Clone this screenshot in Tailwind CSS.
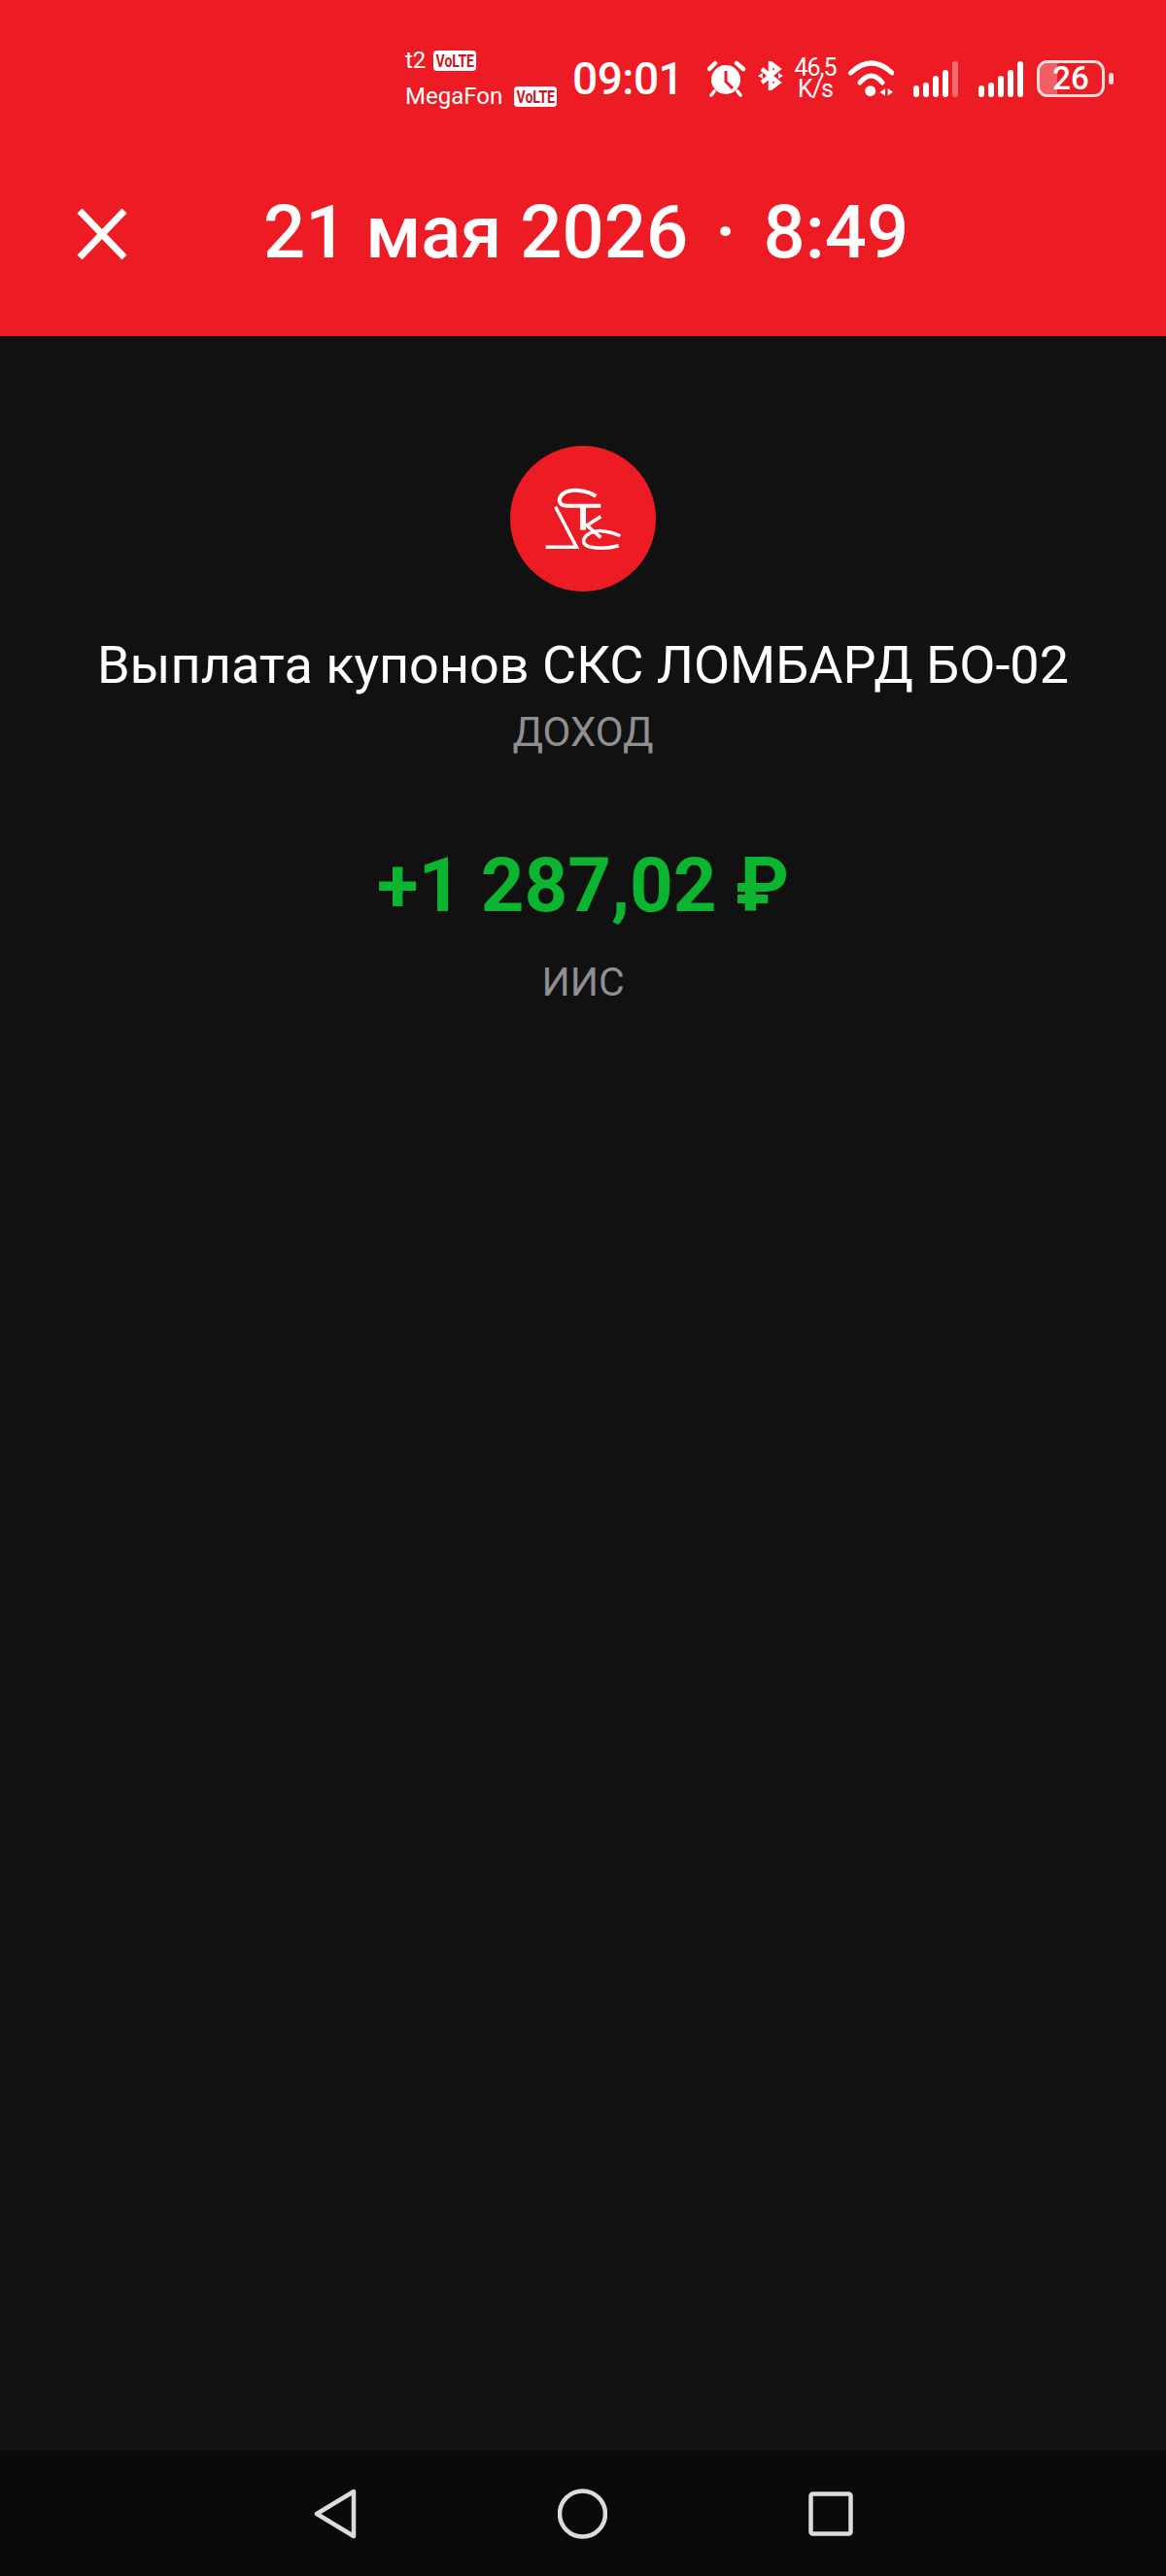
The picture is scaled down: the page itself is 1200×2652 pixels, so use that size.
<!DOCTYPE html>
<html>

<head>
    <meta charset="UTF-8">
    <title>Операция</title>
    <script src="https://cdn.jsdelivr.net/npm/@tailwindcss/browser@4"></script>
</head>

<body class="bg-[#111111] font-['Roboto',sans-serif] text-white">
    <div class="flex flex-col w-[1200px] h-[2652px] overflow-hidden">
        <!-- red header with status bar -->
        <header class="bg-[#ed1c24] h-[346px] shrink-0">
            <div class="flex items-center h-[162px] pl-[417px]">
                <div class="flex flex-col gap-[16px] w-[160px] text-[24px] leading-[21px]">
                    <div class="flex items-center gap-[8px] h-[21px]">
                        <span>t2</span>
                        <span class="flex items-center justify-center bg-white text-[#c9161e] rounded-[4px] w-[44px] h-[21px] text-[18px] leading-[21px] font-bold">
                            <span class="inline-block scale-x-[0.78]">VoLTE</span>
                        </span>
                    </div>
                    <div class="flex items-center gap-[12px] h-[21px]">
                        <span>MegaFon</span>
                        <span class="flex items-center justify-center bg-white text-[#c9161e] rounded-[4px] w-[44px] h-[21px] text-[18px] leading-[21px] font-bold">
                            <span class="inline-block scale-x-[0.78]">VoLTE</span>
                        </span>
                    </div>
                </div>
                <span class="ml-[12px] text-[46px] leading-[46px] w-[110px] tracking-[-0.5px] font-medium">09:01</span>
                <!-- alarm -->
                <svg class="ml-[29px]" width="40" height="38" viewBox="0 0 40 38" fill="none">
                    <circle cx="19" cy="20" r="15" fill="white" />
                    <path d="M19 11v11l7 7" stroke="#ed1c24" stroke-width="3" />
                    <path d="M2 9 8 3M30 3l7 6" stroke="white" stroke-width="4.5" stroke-linecap="round" />
                    <path d="M7 32l-3 4M31 32l3 4" stroke="white" stroke-width="3.5" stroke-linecap="round" />
                </svg>
                <!-- bluetooth -->
                <svg class="ml-[12px] mb-[6px]" width="26" height="30" viewBox="0 0 26 30" fill="none">
                    <path d="M4 8 21 22 13 28V2l8 6L4 22" stroke="white" stroke-width="4.5" />
                    <path d="M0 15 5 12V18ZM26 15 21 12V18Z" fill="white" />
                </svg>
                <div class="ml-[11px] w-[44px] flex flex-col items-center text-[25px] leading-[22px] tracking-[-1px]">
                    <span>46,5</span>
                    <span>K/s</span>
                </div>
                <!-- wifi -->
                <svg class="ml-[12px]" width="47" height="38" viewBox="0 0 47 38" fill="none">
                    <path d="M2.5 13Q23.7 -7 45 13" stroke="white" stroke-width="5" stroke-linecap="round" />
                    <path d="M12 23Q23.7 9 35 23" stroke="white" stroke-width="5" stroke-linecap="round" />
                    <circle cx="22.7" cy="31.7" r="5.5" fill="white" />
                    <path d="M32.7 33 38 29V36.5ZM40.7 29V36.5L46 32.7Z" fill="white" />
                </svg>
                <!-- signal sim 1 -->
                <div class="ml-[20px] flex items-end gap-[4px] h-[38px]">
                    <i class="block w-[6px] h-[12px] rounded-full bg-white"></i>
                    <i class="block w-[6px] h-[15px] rounded-full bg-white"></i>
                    <i class="block w-[6px] h-[22px] rounded-full bg-white"></i>
                    <i class="block w-[6px] h-[28px] rounded-full bg-white"></i>
                    <i class="block w-[6px] h-[37px] rounded-full bg-white/35"></i>
                </div>
                <!-- signal sim 2 -->
                <div class="ml-[21px] flex items-end gap-[4px] h-[38px]">
                    <i class="block w-[6px] h-[12px] rounded-full bg-white"></i>
                    <i class="block w-[6px] h-[15px] rounded-full bg-white"></i>
                    <i class="block w-[6px] h-[22px] rounded-full bg-white"></i>
                    <i class="block w-[6px] h-[28px] rounded-full bg-white"></i>
                    <i class="block w-[6px] h-[37px] rounded-full bg-white"></i>
                </div>
                <!-- battery -->
                <div class="ml-[14px] relative flex items-center justify-center w-[70px] h-[38px] border-[3px] border-white/85 rounded-[11px] overflow-hidden">
                    <div class="absolute left-0 top-0 bottom-0 w-[18px] bg-white/30"></div>
                    <span class="relative text-[33px] leading-[32px] font-medium">26</span>
                </div>
                <div class="ml-[4px] w-[5px] h-[12px] bg-white/85 rounded-full"></div>
            </div>
            <div class="flex items-center h-[158px] pl-[79px]">
                <svg width="52" height="52" viewBox="0 0 52 52" fill="none">
                    <path d="M3 2 49 50M49 2 3 50" stroke="white" stroke-width="7" />
                </svg>
                <div class="ml-[140px] mb-[4px] text-[76px] leading-[76px] font-medium whitespace-nowrap">21 мая 2026 <span class="mx-[9px]">·</span> 8:49</div>
            </div>
        </header>

        <!-- operation -->
        <main class="flex-1 flex flex-col items-center">
            <div class="mt-[113px] w-[150px] h-[150px] rounded-full bg-[#ed1c24] flex items-center justify-center">
                <svg width="150" height="150" viewBox="0 0 150 150" fill="none" stroke="white">
                    <path d="M88.3 51.7C78 45 62 44 55 49 48 54 50 61.7 58.3 61.7H93.3" stroke-width="4" />
                    <path d="M46.7 62.7 68.3 104.3H36.7" stroke-width="3.5" />
                    <path d="M75 60V86.500" stroke-width="6" />
                    <path d="M93.300 72.700 79 82 93.300 94.300" stroke-width="3.5" />
                    <path d="M113.300 92.700C104 88 90 85.500 82 90 73 95 74 102 82 104 92 106 104 105 111.700 102.700" stroke-width="3.500" />
                </svg>
            </div>
            <h1 class="mt-[46px] text-[54px] leading-[60px] whitespace-nowrap">Выплата купонов СКС ЛОМБАРД БО-02</h1>
            <p class="mt-[15px] text-[42px] leading-[48px] text-[#8e8e93]">ДОХОД</p>
            <p class="mt-[89px] text-[78px] leading-[90px] font-bold text-[#0cb52f] whitespace-nowrap">+1 287,02 ₽</p>
            <p class="mt-[30px] text-[41px] leading-[48px] text-[#8e8e93]">ИИС</p>
        </main>

        <!-- android nav bar -->
        <nav class="h-[129px] shrink-0 bg-[#0a0a0a] flex items-center justify-center gap-[207px]">
            <svg width="44" height="52" viewBox="0 0 44 52" fill="none">
                <path d="M41 3V49L3 26Z" stroke="#dcdcdc" stroke-width="4.500" stroke-linejoin="round" />
            </svg>
            <svg width="51" height="52" viewBox="0 0 51 52" fill="none">
                <circle cx="25.500" cy="26" r="23.500" stroke="#dcdcdc" stroke-width="4.500" />
            </svg>
            <svg width="46" height="46" viewBox="0 0 46 46" fill="none">
                <rect x="2.500" y="2.500" width="41" height="41" rx="2" stroke="#dcdcdc" stroke-width="4.500" />
            </svg>
        </nav>
    </div>
</body>

</html>
